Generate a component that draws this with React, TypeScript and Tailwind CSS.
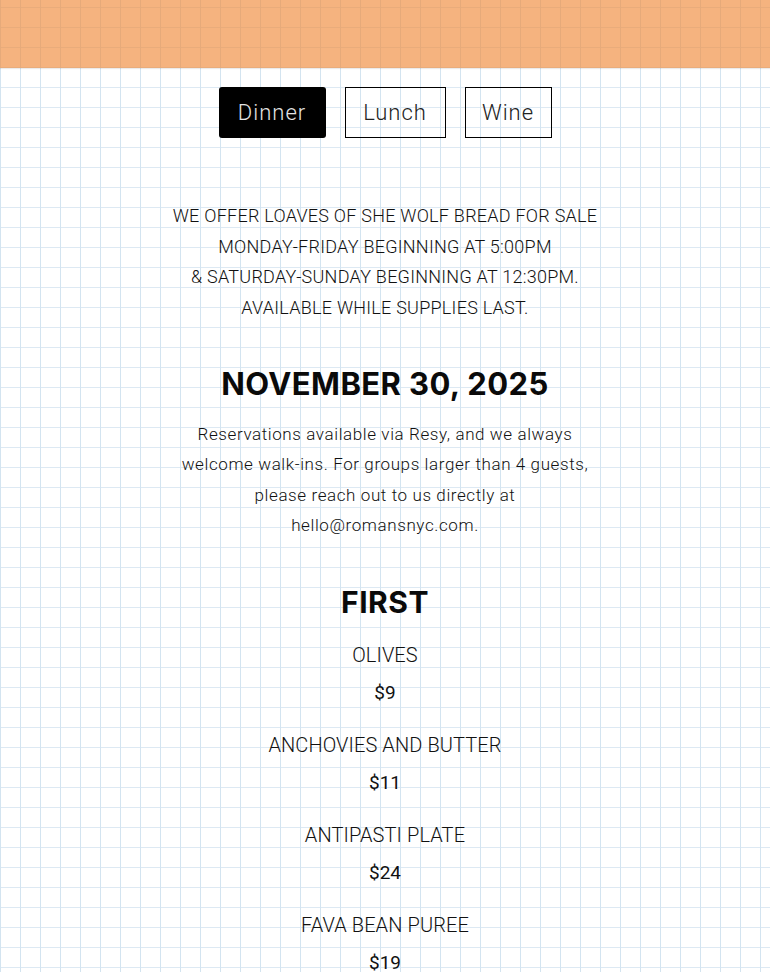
import React from "react";

const items = [
  { name: "OLIVES", price: "$9" },
  { name: "ANCHOVIES AND BUTTER", price: "$11" },
  { name: "ANTIPASTI PLATE", price: "$24" },
  { name: "FAVA BEAN PUREE", price: "$19" },
];

export default function App() {
  return (
    <div
      className="h-[972px] w-full overflow-hidden bg-white text-[#111] font-['Roboto',sans-serif]"
      style={{
        backgroundImage:
          "linear-gradient(to right, #d3e4f0 1px, transparent 1px), linear-gradient(to bottom, #dde9f3 1px, transparent 1px)",
        backgroundSize: "20px 20px",
        backgroundPosition: "0 7px",
      }}
    >
      <header className="h-[68px] w-full bg-[rgba(240,140,60,0.66)] shadow-[0_1px_1px_rgba(0,0,0,0.08)]" />

      <nav className="mt-[19px] flex justify-center gap-[19px]">
        <button className="h-[51px] w-[107px] rounded-[3px] bg-black text-[22px] font-light tracking-[1px] text-[#e4e4e4]">
          Dinner
        </button>
        <button className="h-[51px] w-[101px] border border-black text-[22px] font-light tracking-[1px] text-[#222]">
          Lunch
        </button>
        <button className="h-[51px] w-[87px] border border-black text-[22px] font-light tracking-[1px] text-[#222]">
          Wine
        </button>
      </nav>

      <section className="mt-[63px] flex flex-col items-center text-center">
        <p className="text-[18px] font-light leading-[30.5px] tracking-[0.25px]">
          WE OFFER LOAVES OF SHE WOLF BREAD FOR SALE
          <br />
          MONDAY-FRIDAY BEGINNING AT 5:00PM
          <br />
          &amp; SATURDAY-SUNDAY BEGINNING AT 12:30PM.
          <br />
          AVAILABLE WHILE SUPPLIES LAST.
        </p>

        <h1 className="mt-[41px] font-['Inter',sans-serif] text-[31px] font-bold leading-[40px] tracking-[0.4px] text-[#0a0a0a]">
          NOVEMBER 30, 2025
        </h1>

        <p className="mt-[15px] w-[420px] text-[17px] font-light leading-[30.3px] tracking-[0.6px]">
          Reservations available via Resy, and we always welcome walk-ins. For
          groups larger than 4 guests, please reach out to us directly at
          hello@romansnyc.com.
        </p>

        <h2 className="mt-[42px] font-['Inter',sans-serif] text-[30px] font-bold leading-[40px] tracking-[0.5px] text-[#0a0a0a]">
          FIRST
        </h2>

        <ul className="mt-[18px] flex flex-col gap-[22px]">
          {items.map((it) => (
            <li key={it.name} className="flex flex-col items-center gap-[8px]">
              <span className="text-[20px] font-light leading-[30px] tracking-[0.1px]">
                {it.name}
              </span>
              <span className="text-[19px] font-normal leading-[30px]">
                {it.price}
              </span>
            </li>
          ))}
        </ul>
      </section>
    </div>
  );
}
